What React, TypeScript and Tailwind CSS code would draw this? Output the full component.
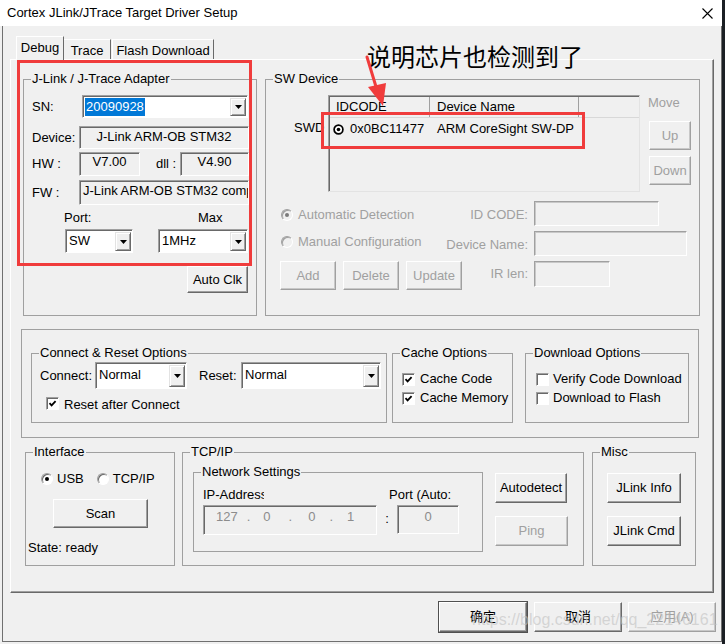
import React from "react";

type P = { children?: React.ReactNode; className?: string };

function Btn({
  children,
  className = "",
  disabled = false,
  isDefault = false,
}: P & { disabled?: boolean; isDefault?: boolean }) {
  const tone = disabled
    ? "text-[#a0a0a0] border-b-[#a0a0a0] border-r-[#a0a0a0] shadow-[inset_-1px_-1px_0_#c8c8c8]"
    : "text-black border-b-[#696969] border-r-[#696969] shadow-[inset_-1px_-1px_0_#a0a0a0]";
  const def = isDefault ? "outline outline-1 outline-[#505050]" : "";
  return (
    <div
      className={`flex items-center justify-center bg-[#f0f0f0] border border-t-white border-l-white ${tone} ${def} ${className}`}
    >
      {children}
    </div>
  );
}

function Sunken({ children, className = "" }: P) {
  return (
    <div
      className={`flex bg-[#f0f0f0] border border-t-[#a0a0a0] border-l-[#a0a0a0] border-b-white border-r-white shadow-[inset_1px_1px_0_#696969] overflow-hidden whitespace-nowrap ${className}`}
    >
      {children}
    </div>
  );
}

function DisabledBox({ className = "" }: P) {
  return (
    <div
      className={`bg-[#f0f0f0] border border-t-[#a0a0a0] border-l-[#a0a0a0] border-b-white border-r-white shadow-[inset_1px_1px_0_#c8c8c8] ${className}`}
    />
  );
}

function Arrow() {
  return (
    <svg width="7" height="4" viewBox="0 0 7 4">
      <path d="M0 0H7L3.5 4Z" fill="#000" />
    </svg>
  );
}

function Combo({
  text,
  className = "",
  selected = false,
}: P & { text: string; selected?: boolean }) {
  return (
    <div
      className={`flex bg-white border border-t-[#a0a0a0] border-l-[#a0a0a0] border-b-white border-r-white shadow-[inset_1px_1px_0_#696969] pl-[2px] pr-[1px] pt-[2px] pb-[1px] ${className}`}
    >
      <div className="flex-1 flex items-stretch overflow-hidden whitespace-nowrap">
        {selected ? (
          <span className="flex items-center bg-[#0078d7] text-white px-[1px]">{text}</span>
        ) : (
          <span className="flex items-center pl-[1px] pb-[2px]">{text}</span>
        )}
      </div>
      <div className="w-[16px] flex items-center justify-center bg-[#f0f0f0] border border-t-[#e3e3e3] border-l-[#e3e3e3] border-b-[#696969] border-r-[#696969] shadow-[inset_1px_1px_0_#fff,inset_-1px_-1px_0_#a0a0a0]">
        <Arrow />
      </div>
    </div>
  );
}

function Radio({ checked = false, disabled = false }: { checked?: boolean; disabled?: boolean }) {
  const bg = disabled ? "bg-[#f0f0f0] shadow-[inset_1px_1px_0_#a0a0a0]" : "bg-white shadow-[inset_1px_1px_0_#696969]";
  return (
    <span
      className={`inline-flex shrink-0 w-[12px] h-[12px] rounded-full border border-t-[#a0a0a0] border-l-[#a0a0a0] border-b-white border-r-white items-center justify-center ${bg}`}
    >
      {checked && (
        <span className={`w-[4px] h-[4px] rounded-full ${disabled ? "bg-[#7a7a7a]" : "bg-black"}`} />
      )}
    </span>
  );
}

function Check({ checked = false }: { checked?: boolean }) {
  return (
    <span className="inline-flex shrink-0 w-[13px] h-[13px] bg-white border border-t-[#a0a0a0] border-l-[#a0a0a0] border-b-white border-r-white shadow-[inset_1px_1px_0_#696969] items-center justify-center">
      {checked && (
        <svg width="9" height="9" viewBox="0 0 9 9">
          <path d="M1.5 4.2L3.6 6.4L7.6 2.2" stroke="#000" strokeWidth="1.8" fill="none" />
        </svg>
      )}
    </span>
  );
}

function Group({ title, className = "", children }: P & { title?: string }) {
  return (
    <fieldset className={`border border-[#a0a0a0] min-w-0 ${className}`}>
      {title && <legend className="ml-[7px] px-[1px] leading-[16px]">{title}</legend>}
      {children}
    </fieldset>
  );
}

function AdapterGroup() {
  return (
    <Group title="J-Link / J-Trace Adapter" className="w-[234px] h-[245px]">
      <div className="flex flex-col pl-[8px]">
        <div className="mt-[8px] flex items-center h-[23px]">
          <span className="w-[50px]">SN:</span>
          <Combo text="20090928" selected className="w-[166px] h-[23px]" />
        </div>
        <div className="mt-[8px] flex items-center h-[23px]">
          <span className="w-[47px]">Device:</span>
          <Sunken className="w-[170px] h-full items-center justify-center pb-[2px]">J-Link ARM-OB STM32</Sunken>
        </div>
        <div className="mt-[3px] flex items-center h-[24px]">
          <span className="w-[47px]">HW :</span>
          <Sunken className="w-[61px] h-full items-center justify-center pb-[4px]">V7.00</Sunken>
          <span className="ml-[16px] w-[24px]">dll :</span>
          <Sunken className="w-[69px] h-full items-center justify-center pb-[4px]">V4.90</Sunken>
        </div>
        <div className="mt-[4px] flex items-center h-[25px]">
          <span className="w-[47px]">FW :</span>
          <Sunken className="w-[170px] h-full items-center justify-start pl-[3px] pb-[3px]">
            J-Link ARM-OB STM32 compiled Aug 22 2012 11:22:45
          </Sunken>
        </div>
        <div className="mt-[5px] flex h-[16px]">
          <span className="w-[134px] pl-[32px]">Port:</span>
          <span className="ml-[32px]">Max</span>
        </div>
        <div className="mt-[3px] flex h-[24px]">
          <Combo text="SW" className="ml-[33px] w-[68px] h-[24px]" />
          <Combo text="1MHz" className="ml-[25px] w-[90px] h-[24px]" />
        </div>
        <Btn className="mt-[13px] ml-[155px] w-[61px] h-[27px]">Auto Clk</Btn>
      </div>
    </Group>
  );
}

function SwDeviceGroup() {
  return (
    <Group title="SW Device" className="ml-[8px] w-[435px] h-[245px]">
      <div className="flex flex-col">
        <div className="mt-[8px] flex items-start">
          <span className="ml-[28px] mt-[25px] w-[34px]">SWD</span>
          <div className="w-[312px] h-[97px] border border-t-[#a0a0a0] border-l-[#a0a0a0] border-b-[#e3e3e3] border-r-[#e3e3e3] shadow-[inset_1px_1px_0_#696969] flex flex-col pl-[1px] pt-[1px]">
            <div className="flex h-[21px] border-b border-[#d8d8d8]">
              <div className="w-[100px] border-r border-[#a0a0a0] pl-[6px] flex items-center">IDCODE</div>
              <div className="w-[149px] border-r border-[#a0a0a0] pl-[7px] flex items-center">Device Name</div>
              <div className="flex-1" />
            </div>
            <div className="flex h-[22px] items-center">
              <div className="w-[100px] flex items-center pl-[3px]">
                <svg width="11" height="11" viewBox="0 0 11 11">
                  <circle cx="5.5" cy="5.5" r="4.4" stroke="#000" strokeWidth="1.7" fill="#fff" />
                  <circle cx="5.5" cy="5.5" r="1.8" fill="#000" />
                </svg>
                <span className="ml-[6px]">0x0BC11477</span>
              </div>
              <span className="pl-[7px]">ARM CoreSight SW-DP</span>
            </div>
          </div>
          <div className="ml-[8px] w-[44px] flex flex-col">
            <span className="h-[16px] text-[#a0a0a0]">Move</span>
            <Btn disabled className="mt-[10px] ml-[1px] w-[42px] h-[29px]">Up</Btn>
            <Btn disabled className="mt-[6px] ml-[1px] w-[42px] h-[29px]">Down</Btn>
          </div>
        </div>

        <div className="mt-[9px] flex h-[25px]">
          <div className="w-[262px] flex items-center justify-between pl-[15px] text-[#a0a0a0]">
            <span className="flex items-center pt-[2px]">
              <Radio checked disabled />
              <span className="ml-[5px]">Automatic Detection</span>
            </span>
            <span className="pt-[2px]">ID CODE:</span>
          </div>
          <DisabledBox className="ml-[6px] w-[125px] h-full" />
        </div>
        <div className="mt-[5px] flex h-[25px]">
          <div className="w-[262px] flex items-center justify-between pl-[15px] text-[#a0a0a0]">
            <span className="flex items-center pb-[3px]">
              <Radio disabled />
              <span className="ml-[5px]">Manual Configuration</span>
            </span>
            <span className="pt-[2px]">Device Name:</span>
          </div>
          <DisabledBox className="ml-[6px] w-[153px] h-full" />
        </div>
        <div className="mt-[5px] flex h-[29px] items-start">
          <div className="w-[262px] h-full flex items-center justify-between pl-[14px] text-[#a0a0a0]">
            <div className="flex h-full">
              <Btn disabled className="w-[56px] h-full">Add</Btn>
              <Btn disabled className="ml-[7px] w-[56px] h-full">Delete</Btn>
              <Btn disabled className="ml-[7px] w-[56px] h-full">Update</Btn>
            </div>
            <span className="pb-[3px]">IR len:</span>
          </div>
          <DisabledBox className="ml-[6px] w-[76px] h-[26px]" />
        </div>
      </div>
    </Group>
  );
}

function MiddleBox() {
  return (
    <div className="mt-[13px] ml-[10px] w-[678px] h-[109px] border border-[#a0a0a0] flex items-start">
      <Group title="Connect & Reset Options" className="ml-[9px] mt-[15px] w-[356px] h-[78px]">
        <div className="mt-[1px] h-[27px] flex items-center pl-[8px]">
          <span className="w-[55px]">Connect:</span>
          <Combo text="Normal" className="w-[92px] h-full" />
          <span className="ml-[12px] w-[42px]">Reset:</span>
          <Combo text="Normal" className="w-[140px] h-full" />
        </div>
        <div className="mt-[6px] h-[16px] flex items-center pl-[14px]">
          <Check checked />
          <span className="ml-[5px] pt-[3px]">Reset after Connect</span>
        </div>
      </Group>
      <Group title="Cache Options" className="ml-[5px] mt-[15px] w-[121px] h-[78px]">
        <div className="mt-[10px] h-[16px] flex items-center pl-[9px]">
          <Check checked />
          <span className="ml-[5px] whitespace-nowrap">Cache Code</span>
        </div>
        <div className="mt-[3px] h-[16px] flex items-center pl-[9px]">
          <Check checked />
          <span className="ml-[5px] whitespace-nowrap">Cache Memory</span>
        </div>
      </Group>
      <Group title="Download Options" className="ml-[12px] mt-[15px] w-[164px] h-[78px]">
        <div className="mt-[10px] h-[16px] flex items-center pl-[10px]">
          <Check />
          <span className="ml-[4px] whitespace-nowrap">Verify Code Download</span>
        </div>
        <div className="mt-[3px] h-[16px] flex items-center pl-[10px]">
          <Check />
          <span className="ml-[4px] whitespace-nowrap">Download to Flash</span>
        </div>
      </Group>
    </div>
  );
}

function BottomRow() {
  return (
    <div className="mt-[6px] pl-[14px] flex items-start">
      <Group title="Interface" className="w-[150px] h-[122px]">
        <div className="mt-[11px] h-[16px] flex items-center pl-[15px]">
          <Radio checked />
          <span className="ml-[4px]">USB</span>
          <span className="ml-[13px] inline-flex">
            <Radio />
          </span>
          <span className="ml-[4px]">TCP/IP</span>
        </div>
        <Btn className="mt-[12px] ml-[27px] w-[95px] h-[29px]">Scan</Btn>
        <div className="mt-[12px] pl-[2px]">State: ready</div>
      </Group>
      <Group title="TCP/IP" className="ml-[7px] w-[402px] h-[122px]">
        <div className="flex items-start">
          <Group title="Network Settings" className="ml-[10px] mt-[4px] w-[290px] h-[88px]">
            <div className="pl-[9px]">
              <div className="mt-[7px] h-[16px] flex">
                <span className="w-[186px]">
                  <span className="block w-[61px] overflow-hidden whitespace-nowrap">IP-Address:</span>
                </span>
                <span>Port (Auto:</span>
              </div>
              <div className="mt-[2px] flex">
                <Sunken className="w-[174px] h-[30px] items-start pt-[3px] text-[#8c8c8c]">
                  <span className="ml-[12px]">127</span>
                  <span className="ml-[9px]">.</span>
                  <span className="ml-[13px]">0</span>
                  <span className="ml-[18px]">.</span>
                  <span className="ml-[16px]">0</span>
                  <span className="ml-[14px]">.</span>
                  <span className="ml-[14px]">1</span>
                </Sunken>
                <span className="w-[20px] text-center self-center pb-[2px]">:</span>
                <Sunken className="w-[62px] h-[29px] items-start justify-center pt-[3px] text-[#8c8c8c]">0</Sunken>
              </div>
            </div>
          </Group>
          <div className="ml-[12px] mt-[13px] flex flex-col">
            <Btn className="w-[72px] h-[30px]">Autodetect</Btn>
            <Btn disabled className="mt-[13px] w-[73px] h-[30px]">Ping</Btn>
          </div>
        </div>
      </Group>
      <Group title="Misc" className="ml-[8px] w-[104px] h-[122px]">
        <div className="mt-[13px] pl-[14px] flex flex-col">
          <Btn className="w-[74px] h-[30px]">JLink Info</Btn>
          <Btn className="mt-[13px] w-[74px] h-[30px]">JLink Cmd</Btn>
        </div>
      </Group>
    </div>
  );
}

export default function App() {
  return (
    <div className="relative w-[725px] h-[644px] overflow-hidden flex bg-[#f0f0f0] font-['Liberation_Sans','Noto_Sans_CJK_SC',sans-serif] text-[13px] leading-[16px] text-black">
      <div className="w-[722px] h-[644px] flex flex-col shrink-0">
        <div className="h-[26px] bg-white flex items-center pl-[7px] pr-[9px] shrink-0">
          <span className="flex-1">Cortex JLink/JTrace Target Driver Setup</span>
          <svg width="11" height="11" viewBox="0 0 11 11">
            <path d="M0.5 0.5L10.5 10.5M10.5 0.5L0.5 10.5" stroke="#000" strokeWidth="1.1" />
          </svg>
        </div>
        <div className="ml-[2px] h-[616px] border-l border-r border-b border-[#707070] flex flex-col">
          <div className="mt-[10px] h-[24px] flex items-end pl-[13px]">
            <div className="relative z-10 w-[48px] h-[24px] bg-[#f0f0f0] border-t border-l border-r border-t-white border-l-white border-r-[#696969] flex items-center justify-center pb-[1px]">
              Debug
            </div>
            <div className="w-[47px] h-[21px] border-t border-r border-t-white border-r-[#696969] flex items-center justify-center pt-[1px]">
              Trace
            </div>
            <div className="ml-[1px] w-[102px] h-[21px] border-t border-l border-r border-t-white border-l-white border-r-[#696969] flex items-center justify-center pt-[1px]">
              Flash Download
            </div>
          </div>
          <div className="ml-[7px] -mt-px w-[704px] h-[534px] border border-t-white border-l-white border-b-[#696969] border-r-[#696969] shadow-[inset_-1px_-1px_0_#a0a0a0] flex flex-col">
            <div className="mt-[11px] pl-[12px] flex items-start">
              <AdapterGroup />
              <SwDeviceGroup />
            </div>
            <MiddleBox />
            <BottomRow />
          </div>
          <div className="mt-[9px] pl-[436px] flex">
            <Btn isDefault className="w-[88px] h-[30px]">确定</Btn>
            <Btn className="ml-[7px] w-[88px] h-[30px]">取消</Btn>
            <Btn disabled className="ml-[6px] w-[88px] h-[30px]">应用(A)</Btn>
          </div>
        </div>
      </div>
      <div className="flex-1 bg-[#1b1f24]" />

      {/* annotation overlays */}
      <div className="absolute left-[17px] top-[60px] w-[235px] h-[206px] border-[3px] border-[#f03c3c] pointer-events-none" />
      <div className="absolute left-[321px] top-[112px] w-[264px] h-[37px] border-[3px] border-[#f03c3c] pointer-events-none" />
      <div className="absolute left-[367px] top-[43px] text-[24px] leading-[26px] font-['Noto_Sans_CJK_SC',sans-serif] text-black whitespace-nowrap">
        说明芯片也检测到了
      </div>
      <svg className="absolute left-[360px] top-[50px]" width="36" height="62" viewBox="0 0 36 62">
        <path d="M7 7L17 40" stroke="#f03c3c" strokeWidth="3" strokeLinecap="round" />
        <path d="M8 37L26 33L23 56Z" fill="#f03c3c" />
      </svg>
      <div className="absolute left-[472px] top-[611px] text-[16px] leading-[18px] text-[#c0c0c0]/60 whitespace-nowrap pointer-events-none">
        https://blog.csdn.net/qq_22146161
      </div>
    </div>
  );
}
